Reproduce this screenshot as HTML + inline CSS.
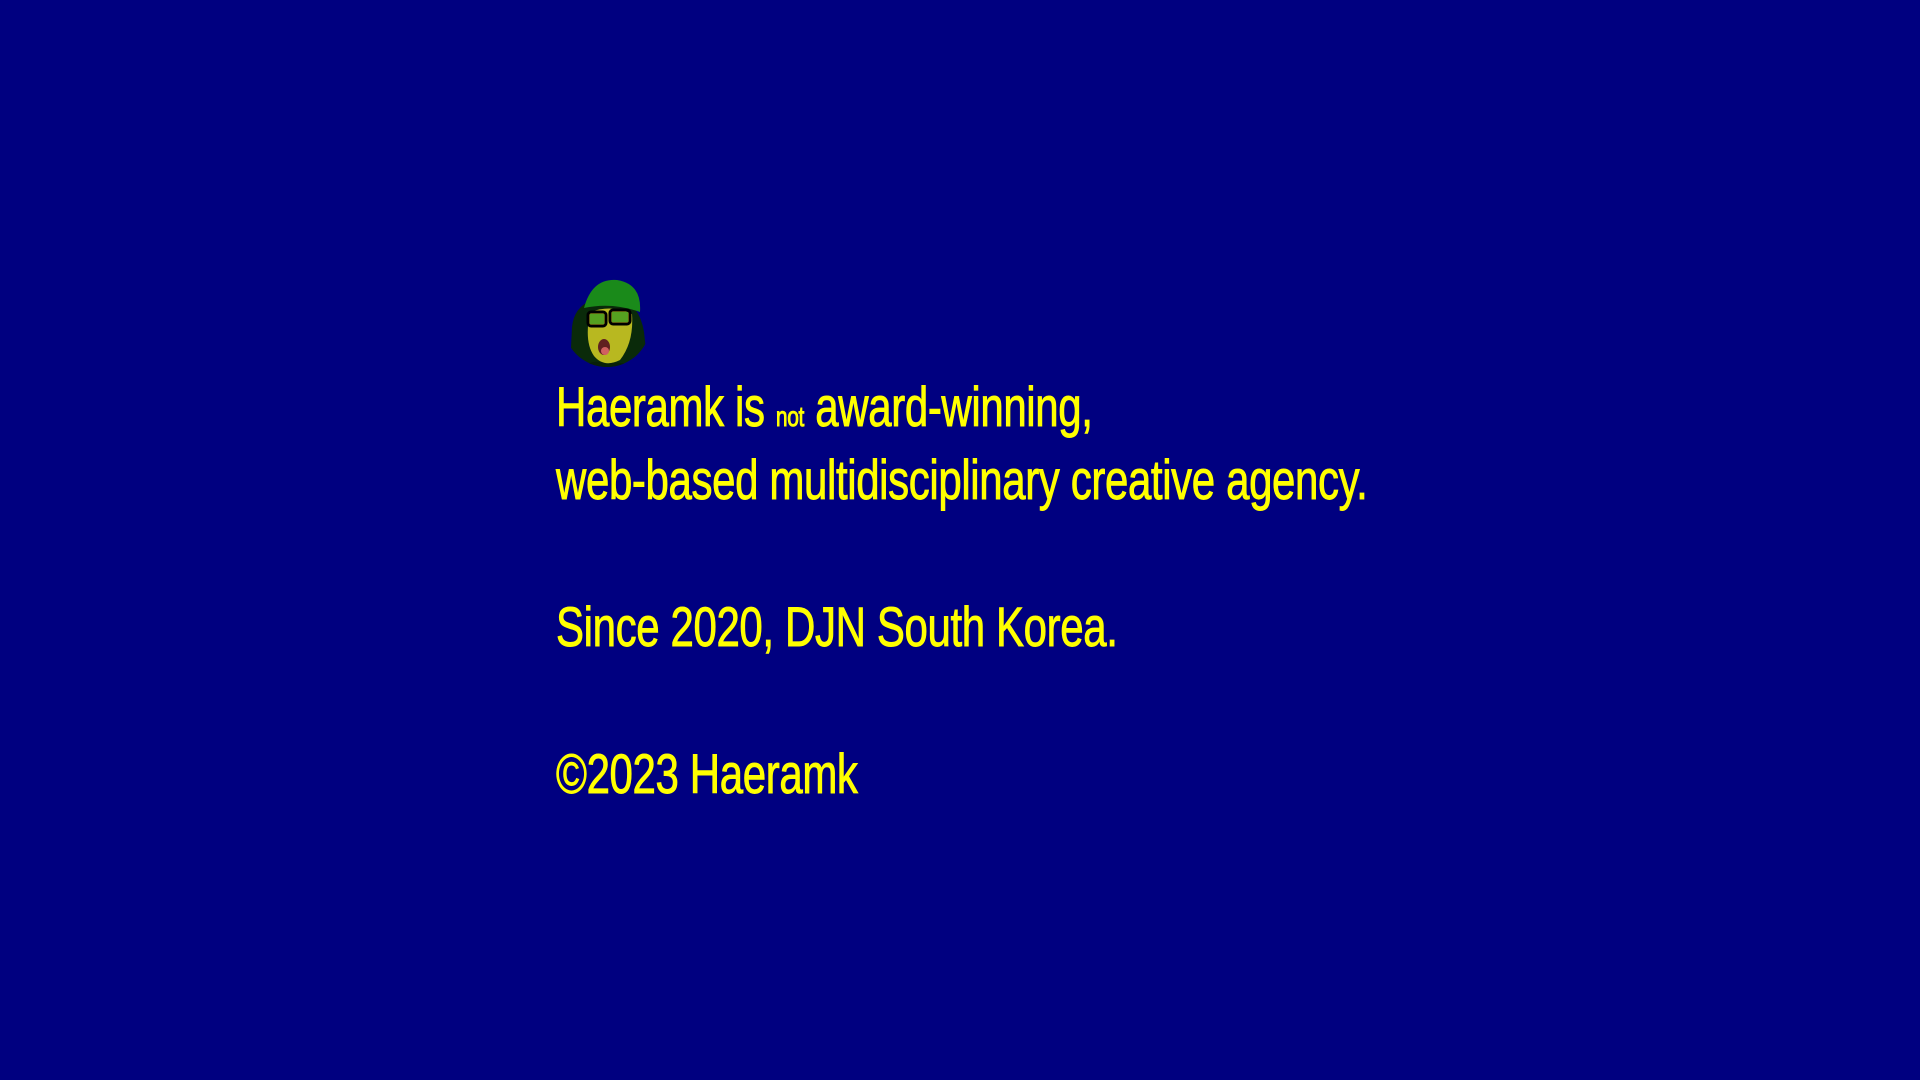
<!DOCTYPE html>
<html><head><meta charset="utf-8"><style>
html,body{margin:0;padding:0;background:#000080;width:1920px;height:1080px;overflow:hidden}
.l{position:absolute;left:556px;color:#ffff00;font-family:"Liberation Sans",sans-serif;font-size:56px;line-height:56px;white-space:nowrap;transform:scaleX(0.75);transform-origin:left top;letter-spacing:-0.5px;-webkit-text-stroke:0.9px #ffff00}
.n{font-size:28px}
</style></head><body>
<svg style="position:absolute;left:562px;top:272px" width="90" height="96" viewBox="0 0 90 96">
<defs><clipPath id="c"><ellipse cx="45" cy="50" rx="44" ry="45"/></clipPath></defs>
<g clip-path="url(#c)">
<rect width="90" height="96" fill="#000080"/>
<path d="M8 96 L10 55 Q12 35 30 28 L60 26 Q78 35 82 60 L86 96 Z" fill="#0a2a0a"/>
<path d="M22 36 Q30 6 55 8 Q80 12 78 40 Q50 30 22 36Z" fill="#1a8a1a"/>
<path d="M28 40 Q50 32 70 42 Q72 70 58 88 Q42 96 32 84 Q22 70 28 40Z" fill="#b8b820"/>
<rect x="26" y="40" width="18" height="14" rx="3" fill="none" stroke="#000" stroke-width="3"/>
<rect x="48" y="38" width="20" height="14" rx="3" fill="none" stroke="#000" stroke-width="3"/>
<rect x="28" y="42" width="14" height="10" fill="#55a020"/>
<rect x="50" y="40" width="16" height="10" fill="#55a020"/>
<ellipse cx="42" cy="75" rx="6" ry="8" fill="#602020"/>
<ellipse cx="43" cy="79" rx="4" ry="4" fill="#d06060"/>
<path d="M20 96 Q30 86 45 92 Q60 88 70 96Z" fill="#082008"/>
</g></svg>
<div class="l" style="top:379px">Haeramk is <span class="n">not</span> award-winning,</div>
<div class="l" style="top:452px">web-based multidisciplinary creative agency.</div>
<div class="l" style="top:599px">Since 2020, DJN South Korea.</div>
<div class="l" style="top:746px">©2023 Haeramk</div>
</body></html>
